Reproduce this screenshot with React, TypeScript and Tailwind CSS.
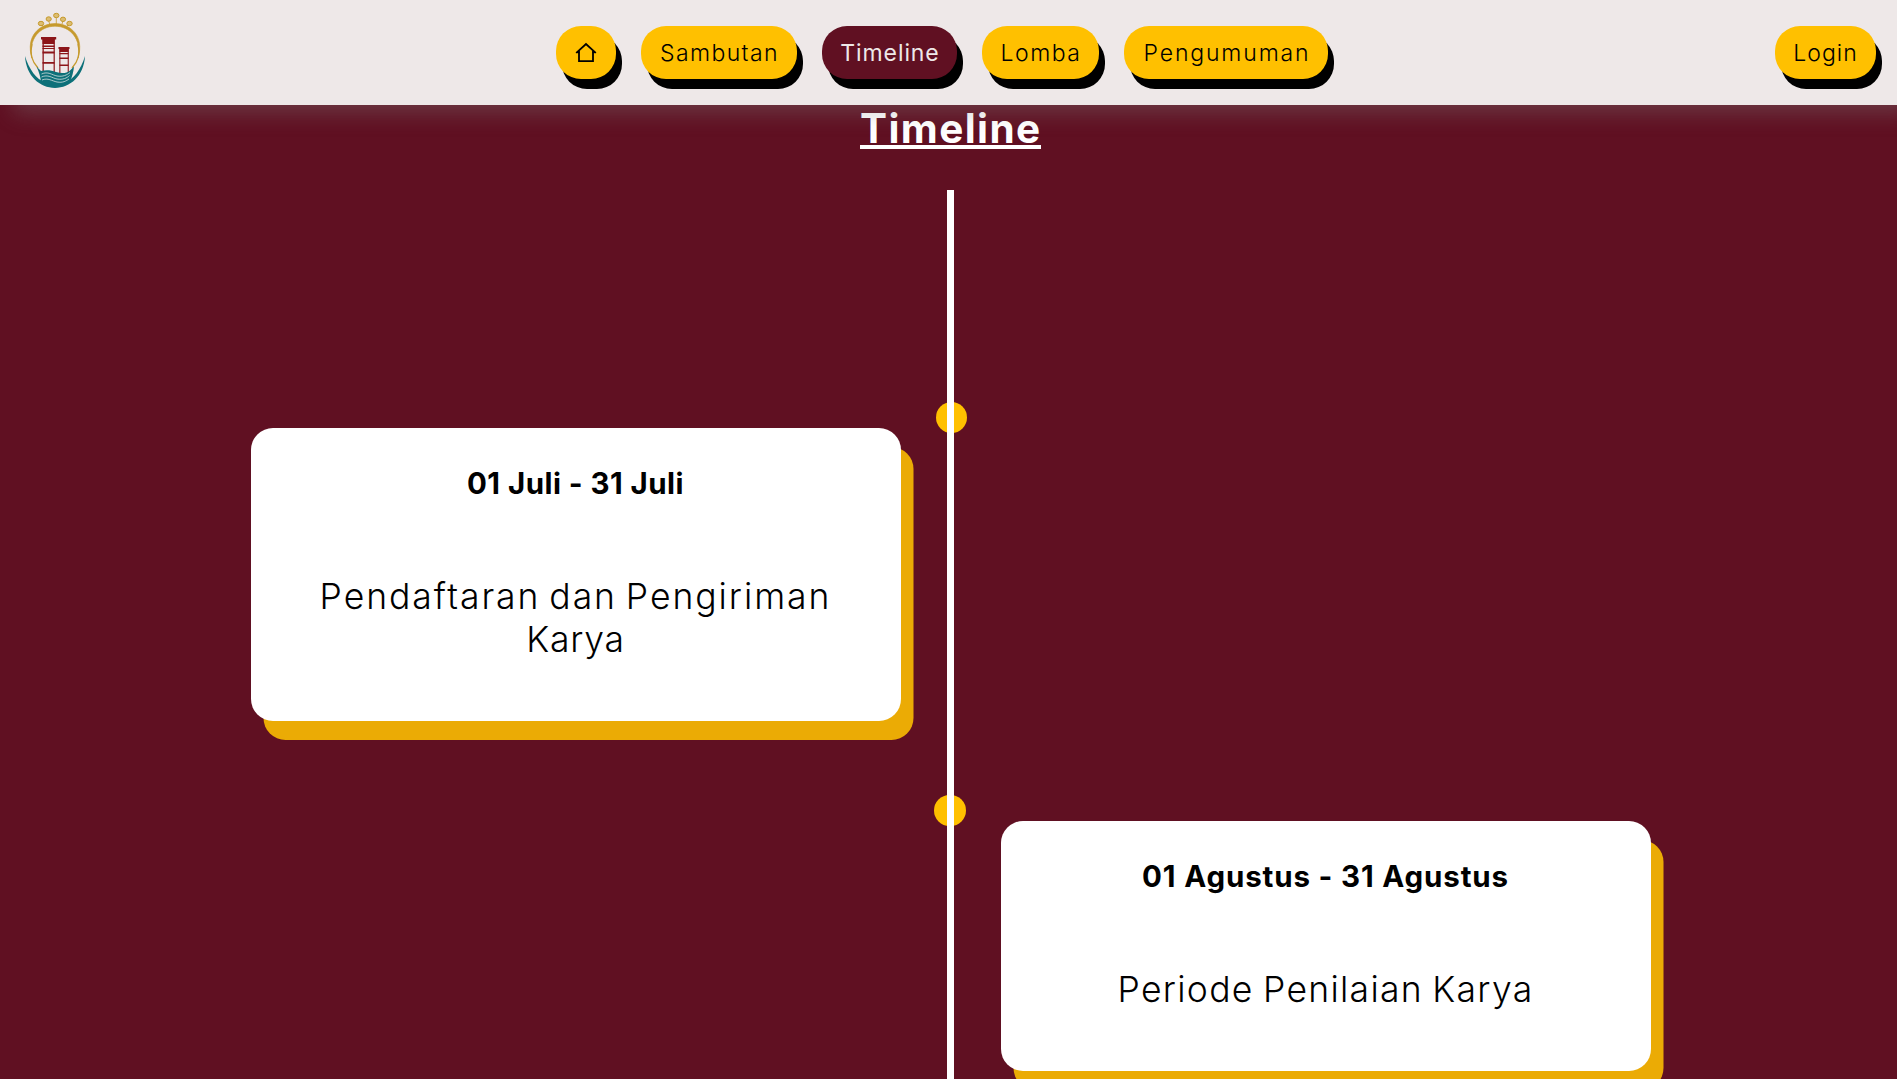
type NavItem = { label: string; width: string; spacing: string; active?: boolean };

const navItems: NavItem[] = [
  { label: "Sambutan", width: "w-[156px]", spacing: "tracking-[1.4px] indent-px" },
  { label: "Timeline", width: "w-[135px]", spacing: "tracking-[0.9px] indent-px", active: true },
  { label: "Lomba", width: "w-[117px]", spacing: "tracking-[1.5px] indent-px" },
  { label: "Pengumuman", width: "w-[204px]", spacing: "tracking-[1.85px] indent-[2px]" },
];

const pill =
  "flex h-[53px] shrink-0 items-center justify-center rounded-[25px] pt-[2px] whitespace-nowrap text-[23px] shadow-[6px_10px_0_#000]";

function Logo() {
  return (
    <svg viewBox="0 0 70 84" className="h-[84px] w-[70px]" fill="none">
      <g stroke="#c69a2d">
        <path d="M18 60 A25.500 25.500 0 0 1 12 36M52 60 A25.500 25.500 0 0 0 58 36" strokeWidth="1.300" />
        <path d="M12 50 C5 28 20 15.500 35 15.500 C50 15.500 65 28 58 50 C62 31 50 18.200 35 18.200 C20 18.200 8 31 12 50Z" fill="#c69a2d" strokeWidth=".6" />
        <path d="M36.300 9v7M28.700 13l1 3M43 13l-1 3M22 17l2 2M48 17l-2 2" strokeWidth=".8" />
      </g>
      <g fill="#dcbd72" stroke="#c69a2d" strokeWidth="1">
        <ellipse cx="21" cy="15.500" rx="2.700" ry="2.200" />
        <ellipse cx="28.700" cy="11" rx="2.600" ry="2.200" />
        <ellipse cx="36.300" cy="7.500" rx="2.700" ry="2.200" />
        <ellipse cx="43" cy="11.300" rx="2.600" ry="2.200" />
        <ellipse cx="49.500" cy="15.500" rx="2.700" ry="2.200" />
      </g>
      <g fill="#8c1519">
        <path d="M21 29h15.200v2.600H21zM22.500 31h12v5h-12zM22.500 37.500h12v1.600h-12zM22.500 40h12v1h-12zM22.500 43.500h12v2h-12zM22.500 54h12v1.800h-12z" />
        <path d="M22.500 31h1.300v33h-1.300zM33.600 31h1.200v33h-1.200z" />
        <path d="M38.500 39h11v2h-11zM39.500 40.500h9v3.500h-9zM39.500 45h9v1.200h-9zM39.500 49.500h9v1.500h-9zM39.500 56.500h9v1.500h-9z" />
        <path d="M39.300 40h1.100v25h-1.100zM47.700 40h1.100v25h-1.100z" />
      </g>
      <g fill="#0d7079">
        <path d="M5 48 C6 68 20 79.900 35 79.900 C50 79.900 64 68 65 48 C61 62 53 71 46 74 C38 76.500 32 76.500 24 74 C17 71 9 62 5 48Z" />
        <path d="M16.500 58.500 L21 63 C26 61.500 31 62 36 64 C42 66 47 65 49.500 63 L54 58.500 C53.500 64 52 69 50 74 C45 78 26 78 21 74 C20.500 69 19 64 16.500 58.500Z" />
      </g>
      <path
        d="M21.500 66 C28 63 32 67 37 68 C43 69 47 67 50 64.500M21.500 69 C28 66 32 70 37 71 C43 72 47 70 49.500 67.500M22 72 C28 69.500 32 73 37 74 C43 75 46 73 49 71"
        stroke="#d5e0e0"
        strokeWidth=".8"
      />
    </svg>
  );
}

function HomeIcon() {
  return (
    <svg viewBox="0 0 22 22" className="mr-px mb-px size-[22px]" fill="none" stroke="#000" strokeWidth="1.8">
      <path d="M1.300 10.800 11 2 20.700 10.800" />
      <path d="M4 9v10.200h14V9" />
      <path d="M.9 10.600h3.500M17.600 10.600h3.500" strokeWidth="1" />
    </svg>
  );
}

function Header() {
  return (
    <header className="relative z-10 flex h-[105px] shrink-0 items-center justify-between bg-[#eee8e8] pr-[21px] pl-5 shadow-[14px_8px_20px_rgba(128,128,128,0.35)]">
      <a className="flex h-[105px] w-[89px] items-start pt-2">
        <Logo />
      </a>
      <nav className="flex gap-[25px]">
        <a className={`${pill} w-[60px] bg-[#ffc000]`}>
          <HomeIcon />
        </a>
        {navItems.map((item) => (
          <a
            key={item.label}
            className={`${pill} ${item.width} ${item.spacing} ${
              item.active ? "bg-[#601022] font-normal text-[#eee8e8]" : "bg-[#ffc000] font-light text-black"
            }`}
          >
            {item.label}
          </a>
        ))}
      </nav>
      <a className={`${pill} w-[101px] bg-[#ffc000] font-light tracking-[1px] text-black`}>Login</a>
    </header>
  );
}

const card =
  "flex w-[650px] flex-col items-center rounded-[22px] bg-white text-black shadow-[12.5px_19px_0_#ebab05]";

export default function App() {
  return (
    <div className="flex h-screen flex-col overflow-hidden bg-[#601022] font-['Inter',sans-serif]">
      <Header />
      <main className="flex flex-1 flex-col items-center pl-[4px]">
        <h1 className="mt-2 h-[77px] shrink-0 text-[40.5px] font-bold text-white">
          <span className="block w-[181px] border-b-4 border-white pb-px leading-[31px] tracking-[1.4px] whitespace-nowrap">Timeline</span>
        </h1>
        <div className="grid w-[1400px] flex-1 grid-cols-[650px_100px_650px]">
          <div className="pt-[238px]">
            <section className={`${card} h-[293px]`}>
              <h2 className="mt-[37px] text-[29.5px] leading-9 font-bold tracking-[0.45px]">01 Juli - 31 Juli</h2>
              <p className="mt-[74px] text-center text-[35.5px] leading-[43px] font-light">
                <span className="block tracking-[1.95px] [word-spacing:-3px]">Pendaftaran dan Pengiriman</span>
                <span className="block tracking-[0.8px]">Karya</span>
              </p>
            </section>
          </div>
          <div className="relative">
            <div className="absolute top-[212px] left-[35px] size-[31px] rounded-full bg-[#ffc000]" />
            <div className="absolute top-[605px] left-[33px] h-[31px] w-8 rounded-full bg-[#ffc000]" />
            <div className="relative ml-[46px] h-full w-[7px] bg-white" />
          </div>
          <div className="pt-[631px]">
            <section className={`${card} h-[250px]`}>
              <h2 className="mt-[37px] text-[29.5px] leading-9 font-bold tracking-[0.85px]">01 Agustus - 31 Agustus</h2>
              <p className="mt-[74px] text-[35.5px] leading-[43px] font-light tracking-[1.3px] [word-spacing:-2px]">Periode Penilaian Karya</p>
            </section>
          </div>
        </div>
      </main>
    </div>
  );
}
